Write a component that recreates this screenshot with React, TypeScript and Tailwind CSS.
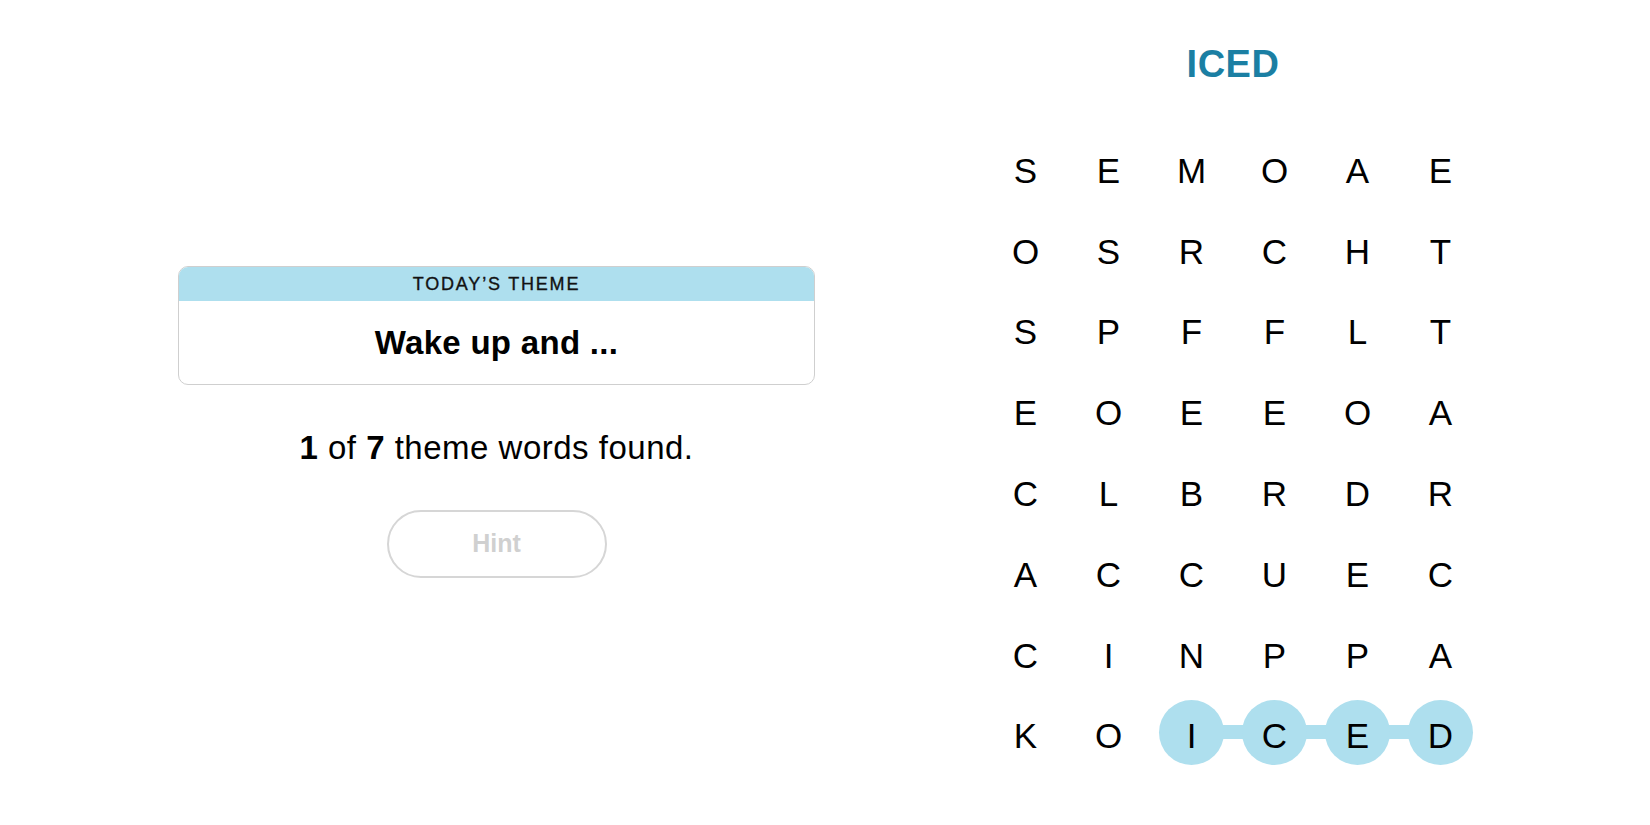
import React from "react";

const GRID: string[][] = [
  ["S", "E", "M", "O", "A", "E"],
  ["O", "S", "R", "C", "H", "T"],
  ["S", "P", "F", "F", "L", "T"],
  ["E", "O", "E", "E", "O", "A"],
  ["C", "L", "B", "R", "D", "R"],
  ["A", "C", "C", "U", "E", "C"],
  ["C", "I", "N", "P", "P", "A"],
  ["K", "O", "I", "C", "E", "D"],
];

// highlighted cells: row 7, cols 2..5
const isHighlighted = (r: number, c: number) => r === 7 && c >= 2 && c <= 5;
const hasBarRight = (r: number, c: number) => r === 7 && c >= 2 && c <= 4;

export default function App() {
  return (
    <div
      className="w-[1650px] h-[825px] bg-white flex text-black"
      style={{ fontFamily: '"Liberation Sans", Arial, sans-serif' }}
    >
      {/* Left column */}
      <div className="w-[984px] flex flex-col items-center pl-[9px] pt-[266px]">
        <div className="w-[637px] border border-[#cfcfcf] rounded-[10px] overflow-hidden">
          <div className="h-[34px] bg-[#aedfee] flex items-center justify-center">
            <span className="text-[18px] leading-none tracking-[1.8px] text-[#121212] [-webkit-text-stroke:0.35px_#121212]">
              TODAY’S THEME
            </span>
          </div>
          <div className="h-[83px] flex items-center justify-center">
            <span className="text-[33px] font-bold tracking-[0.3px] leading-none">
              Wake up and ...
            </span>
          </div>
        </div>

        <div className="mt-[44px] h-[37px] text-[33px] leading-[37px] tracking-[0.5px]">
          <span className="font-bold">1</span> of <span className="font-bold">7</span> theme words found.
        </div>

        <button className="mt-[44px] w-[220px] h-[68px] rounded-full border-2 border-[#d6d6d6] bg-white flex items-center justify-center">
          <span className="text-[25px] font-bold text-[#d0d0d0]">Hint</span>
        </button>
      </div>

      {/* Right column */}
      <div className="w-[498px] flex flex-col items-center pt-[42px]">
        <div className="h-[44px] text-[38px] leading-[44px] font-bold tracking-[0.5px] text-[#1b7fa3]">
          ICED
        </div>
        <div className="mt-[44px] grid grid-cols-[repeat(6,83px)] grid-rows-[repeat(8,80.8px)]">
          {GRID.map((row, r) =>
            row.map((ch, c) => (
              <div key={`${r}-${c}`} className="relative flex items-center justify-center">
                {hasBarRight(r, c) && (
                  <div className="absolute left-1/2 top-[calc(50%-10.5px)] w-[83px] h-[14px] bg-[#aedfee]" />
                )}
                {isHighlighted(r, c) && (
                  <div className="absolute left-[9px] top-[4.5px] w-[65px] h-[65px] rounded-full bg-[#aedfee]" />
                )}
                <span className="relative text-[35px] leading-none">{ch}</span>
              </div>
            ))
          )}
        </div>
      </div>
    </div>
  );
}
